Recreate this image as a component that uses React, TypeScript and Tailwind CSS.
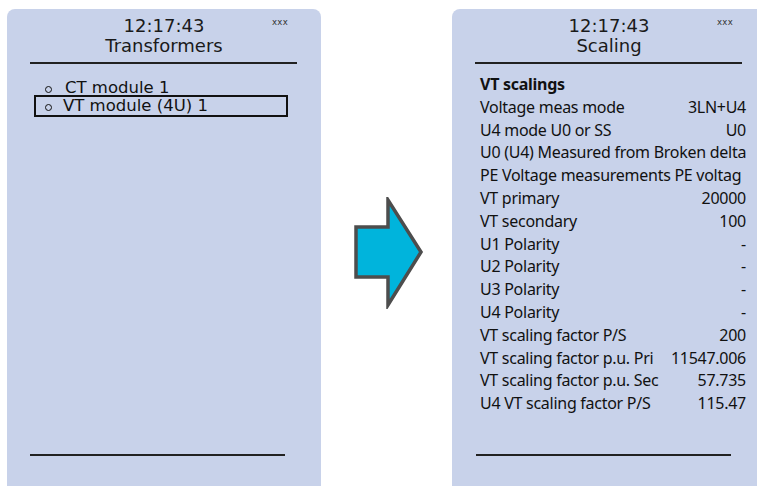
import React from "react";

const rows: [string, string][] = [
  ["Voltage meas mode", "3LN+U4"],
  ["U4 mode U0 or SS", "U0"],
  ["U0 (U4) Measured from Broken delta", ""],
  ["PE Voltage measurements PE voltag", ""],
  ["VT primary", "20000"],
  ["VT secondary", "100"],
  ["U1 Polarity", "-"],
  ["U2 Polarity", "-"],
  ["U3 Polarity", "-"],
  ["U4 Polarity", "-"],
  ["VT scaling factor P/S", "200"],
  ["VT scaling factor p.u. Pri", "11547.006"],
  ["VT scaling factor p.u. Sec", "57.735"],
  ["U4 VT scaling factor P/S", "115.47"],
];

function Header({ title }: { title: string }) {
  return (
    <div className="pt-[7px]">
      <div className="grid grid-cols-[1fr_auto_1fr]">
        <div />
        <div className="text-center text-[18px] leading-[20px] text-[#1a1a1a] font-['DejaVu_Sans',sans-serif]">
          <div>12:17:43</div>
          <div>{title}</div>
        </div>
        <div className="flex justify-end pr-[33px]">
          <span className="text-[8.5px] leading-[10px] mt-[1px] text-[#333] font-['DejaVu_Sans',sans-serif] tracking-[0.3px]">
            xxx
          </span>
        </div>
      </div>
      <div className="ml-[23px] mt-[6px] w-[267px] h-[2px] bg-[#222]" />
    </div>
  );
}

function Bullet() {
  return <span className="inline-block shrink-0 w-[7px] h-[7px] rounded-full border-[1.5px] border-[#111] mt-[3px]" />;
}

export default function App() {
  return (
    <div className="w-[757px] h-[486px] overflow-hidden bg-white flex items-start">
      {/* Left panel */}
      <div className="ml-[7px] mt-[9px] w-[314px] h-[477px] shrink-0 bg-[#c8d2ea] rounded-t-[8px] flex flex-col">
        <Header title="Transformers" />
        <div className="mt-[15px] text-[16.5px] text-[#111] font-['DejaVu_Sans',sans-serif]">
          <div className="h-[18px] flex items-center pl-[38px] gap-[13px] leading-[18px]">
            <Bullet />
            <span>CT module 1</span>
          </div>
          <div className="-mt-[2px] ml-[27px] w-[254px] h-[22px] border-2 border-[#111] flex items-center pl-[9px] gap-[11px] leading-[18px]">
            <Bullet />
            <span>VT module (4U) 1</span>
          </div>
        </div>
        <div className="flex-1" />
        <div className="ml-[23px] mb-[30px] w-[255px] h-[2px] bg-[#222]" />
      </div>

      {/* Arrow */}
      <div className="w-[131px] shrink-0 h-[486px] flex items-center justify-center">
        <svg width="72" height="112" viewBox="0 0 72 112" className="mt-[20px] ml-[5px]">
          <polygon
            points="3,30 35,30 35,3 68,55 35,108 35,80 3,80"
            fill="#00b4dc"
            stroke="#4d4d4d"
            strokeWidth="3.5"
            strokeLinejoin="miter"
          />
        </svg>
      </div>

      {/* Right panel */}
      <div className="mt-[9px] w-[314px] h-[477px] shrink-0 bg-[#c8d2ea] rounded-t-[8px] flex flex-col">
        <Header title="Scaling" />
        <div className="mt-[9px] pl-[28px] pr-[20px] text-[16px] leading-[22.8px] tracking-[-0.27px] text-[#111] font-['Noto_Sans',sans-serif]">
          <div className="font-bold">VT scalings</div>
          {rows.map(([k, v]) => (
            <div key={k} className="flex justify-between whitespace-nowrap">
              <span>{k}</span>
              {v && <span>{v}</span>}
            </div>
          ))}
        </div>
        <div className="flex-1" />
        <div className="ml-[24px] mb-[30px] w-[255px] h-[2px] bg-[#222]" />
      </div>
    </div>
  );
}
